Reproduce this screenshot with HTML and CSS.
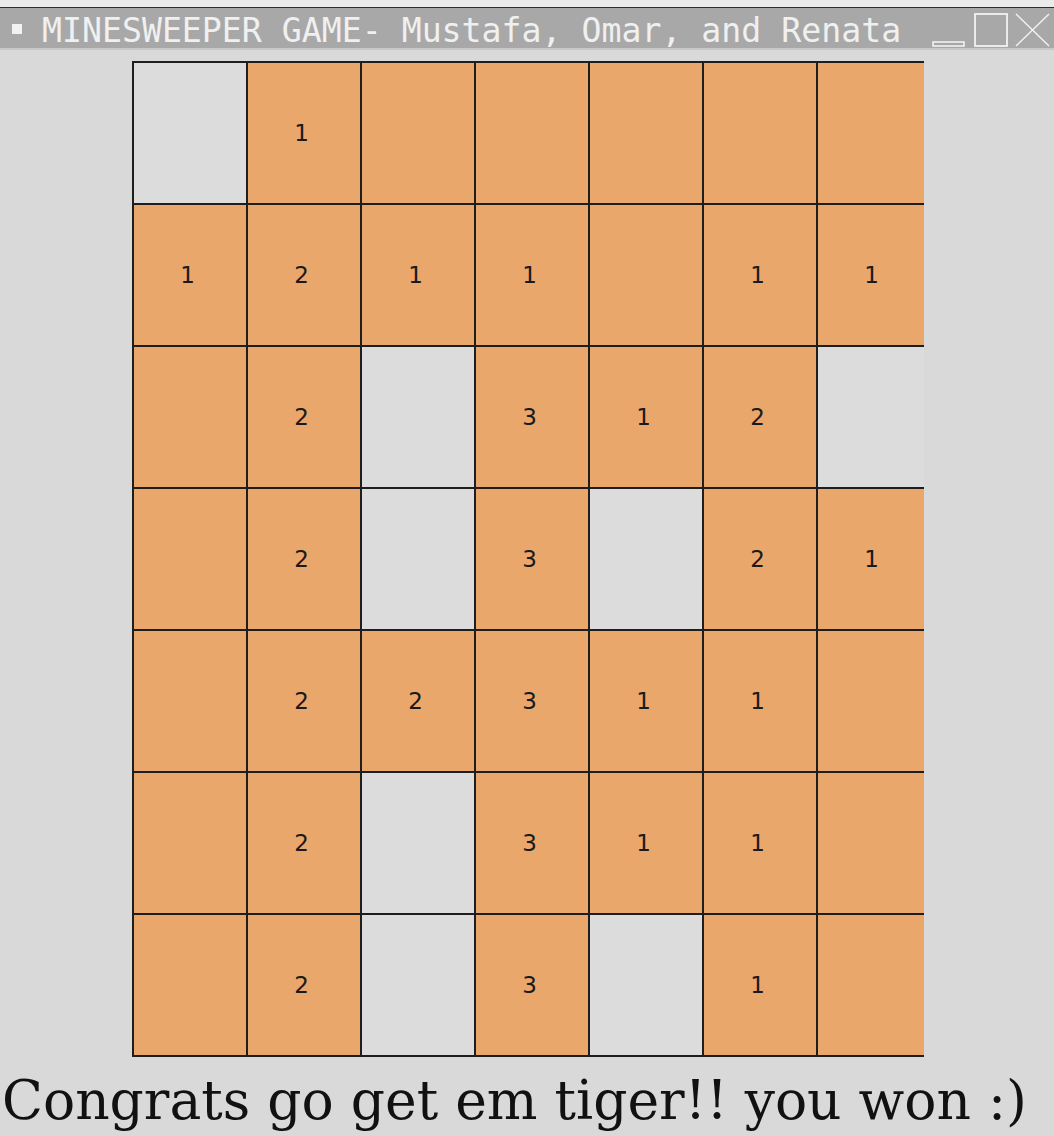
FILE: index.html
```html
<!DOCTYPE html>
<html lang="en">
<head>
    <meta charset="UTF-8">
    <title>MINESWEEPER GAME</title>
    <link rel="stylesheet" href="styles.css">
</head>
<body>

<div class="topstrip"></div>

<div class="titlebar">
    <span class="menu-box"></span>
    <span class="title">MINESWEEPER GAME- Mustafa, Omar, and Renata</span>
    <svg class="buttons" width="118" height="35" viewBox="0 0 118 35">
        <!-- minimise -->
        <rect x="1" y="29" width="31" height="4" fill="none" stroke="#f2f2f2" stroke-width="1.6"/>
        <!-- maximise -->
        <rect x="43" y="1" width="32" height="32" fill="none" stroke="#f2f2f2" stroke-width="1.8"/>
        <!-- close -->
        <path d="M84 1 L117 33 M117 1 L84 33" stroke="#f2f2f2" stroke-width="1.4" fill="none"/>
    </svg>
</div>

<div class="board">
    <!-- row 1 -->
    <div class="cell open"></div>
    <div class="cell">1</div>
    <div class="cell"></div>
    <div class="cell"></div>
    <div class="cell"></div>
    <div class="cell"></div>
    <div class="cell"></div>
    <!-- row 2 -->
    <div class="cell">1</div>
    <div class="cell">2</div>
    <div class="cell">1</div>
    <div class="cell">1</div>
    <div class="cell"></div>
    <div class="cell">1</div>
    <div class="cell">1</div>
    <!-- row 3 -->
    <div class="cell"></div>
    <div class="cell">2</div>
    <div class="cell open"></div>
    <div class="cell">3</div>
    <div class="cell">1</div>
    <div class="cell">2</div>
    <div class="cell open"></div>
    <!-- row 4 -->
    <div class="cell"></div>
    <div class="cell">2</div>
    <div class="cell open"></div>
    <div class="cell">3</div>
    <div class="cell open"></div>
    <div class="cell">2</div>
    <div class="cell">1</div>
    <!-- row 5 -->
    <div class="cell"></div>
    <div class="cell">2</div>
    <div class="cell">2</div>
    <div class="cell">3</div>
    <div class="cell">1</div>
    <div class="cell">1</div>
    <div class="cell"></div>
    <!-- row 6 -->
    <div class="cell"></div>
    <div class="cell">2</div>
    <div class="cell open"></div>
    <div class="cell">3</div>
    <div class="cell">1</div>
    <div class="cell">1</div>
    <div class="cell"></div>
    <!-- row 7 -->
    <div class="cell"></div>
    <div class="cell">2</div>
    <div class="cell open"></div>
    <div class="cell">3</div>
    <div class="cell open"></div>
    <div class="cell">1</div>
    <div class="cell"></div>
</div>

<div class="message">Congrats go get em tiger!! you won :)</div>

</body>
</html>
```

FILE: styles.css
```css
*{
    margin: 0;
    padding: 0;
    box-sizing: border-box;
}

body{
    background: #d9d9d9;
    width: 1054px;
    height: 1136px;
    overflow: hidden;
}

.topstrip{
    height: 8px;
    background: #ebebeb;
    border-bottom: 1px solid #2e2e2e;
}

.titlebar{
    display: flex;
    align-items: center;
    height: 42px;
    background: #a8a8a8;
    border-bottom: 2px solid #c8c8c8;
    padding-left: 12px;
}
.menu-box{
    width: 10px;
    height: 10px;
    background: #f2f2f2;
    margin-top: 1px;
}
.title{
    font-family: "DejaVu Sans Mono", monospace;
    font-size: 33.2px;
    color: #f0f0f0;
    margin-left: 20px;
    line-height: 40px;
    padding-top: 5px;
    white-space: nowrap;
}
.buttons{
    margin-left: auto;
    margin-right: 4px;
    margin-top: 5px;
}

.board{
    display: grid;
    grid-template-columns: repeat(7, 114px);
    grid-auto-rows: 142px;
    width: 792px;
    overflow: hidden;
    margin: 11px 0 0 132px;
    border-bottom: 2px solid #1e1e1e;
}
.cell{
    background: #e9a76b;
    border-left: 2px solid #1e1e1e;
    border-top: 2px solid #1e1e1e;
    display: flex;
    align-items: center;
    justify-content: center;
    font-family: "DejaVu Sans", sans-serif;
    font-size: 23px;
    color: #1a1a1a;
    padding-right: 5px;
}
.cell.open{
    background: #dcdcdc;
}

.message{
    font-family: "DejaVu Serif", serif;
    font-size: 53.5px;
    line-height: 60px;
    color: #111;
    margin: 14px 0 0 2px;
    white-space: nowrap;
}
```
